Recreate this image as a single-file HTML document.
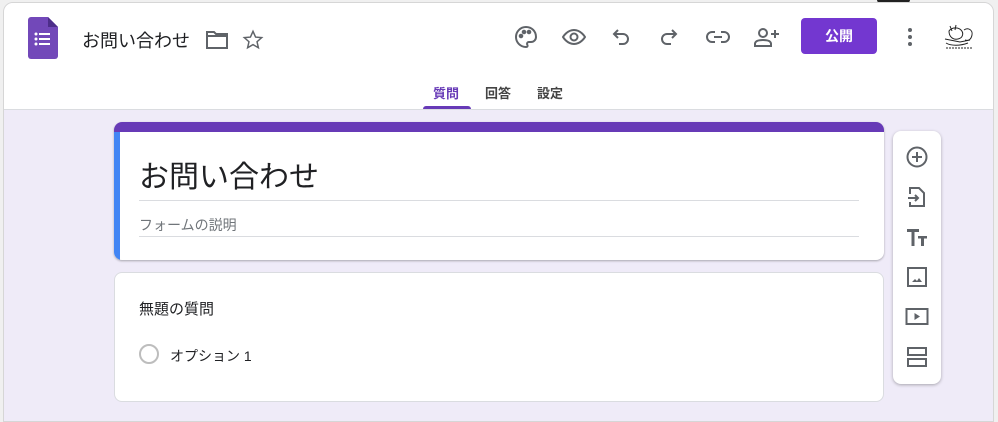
<!DOCTYPE html>
<html><head><meta charset="utf-8"><style>
*{box-sizing:border-box;margin:0;padding:0}
body{width:998px;height:416px;background:#f0f0f0;font-family:"Liberation Sans","Noto Sans CJK JP",sans-serif;position:relative;overflow:hidden}
.win{position:absolute;left:3px;top:2px;width:991px;height:420px;background:#efebf8;border:1px solid #d6d6d6;border-radius:10px 10px 0 0;overflow:hidden}
.hdr{position:absolute;left:0;top:0;width:100%;height:107px;background:#fff;border-bottom:1px solid #dadce0}
.ab{position:absolute}
svg.i{position:absolute;fill:none;stroke:#5f6368;stroke-width:2}
.card{position:absolute;background:#fff;border:1px solid #dadce0;border-radius:8px}
</style></head><body>
<div style="position:absolute;left:877px;top:0;width:33px;height:3px;background:#222;border-radius:0 0 3px 3px"></div>
<div class="win">
<div class="hdr">
 <svg class="ab" style="left:24px;top:14px" width="30" height="42" viewBox="0 0 30 42"><path d="M3 0h17l10 10v29a3 3 0 0 1-3 3H3a3 3 0 0 1-3-3V3a3 3 0 0 1 3-3z" fill="#7248b9"/><path d="M20 0l10 10H20z" fill="#4d2e8a"/><g fill="#fff"><circle cx="8" cy="17" r="1.5"/><circle cx="8" cy="22" r="1.5"/><circle cx="8" cy="27" r="1.5"/><rect x="11" y="16" width="11" height="2"/><rect x="11" y="21" width="11" height="2"/><rect x="11" y="26" width="11" height="2"/></g></svg>
 <div class="ab" style="left:78px;top:24px;font-size:18px;color:#202124">お問い合わせ</div>
 <svg class="i" style="left:202px;top:28px" width="22" height="18" viewBox="0 0 22 18"><path d="M1 1h7l2 2h11v14H1z"/><path d="M1 5h20"/></svg>
 <svg class="i" style="left:238px;top:26px;stroke-width:1.6" width="22" height="22" viewBox="0 0 24 24"><path d="M12 2.5l2.8 6.3 6.7.6-5.1 4.5 1.5 6.6L12 17l-5.9 3.5 1.5-6.6-5.1-4.5 6.7-.6z"/></svg>
 <svg class="i" style="left:510px;top:22px" width="24" height="24" viewBox="0 0 24 24"><path d="M12 2a10 10 0 0 0 0 20c1.5 0 2-1 1.3-2.2-.7-1.2 0-2.8 1.6-2.8H17a5 5 0 0 0 5-5C22 6 17.5 2 12 2z"/><circle cx="7" cy="11" r="1.3" fill="#5f6368"/><circle cx="10" cy="7" r="1.3" fill="#5f6368"/><circle cx="15" cy="7" r="1.3" fill="#5f6368"/></svg>
 <svg class="i" style="left:558px;top:22px" width="24" height="24" viewBox="0 0 24 24"><path d="M1 12s4-7 11-7 11 7 11 7-4 7-11 7S1 12 1 12z"/><circle cx="12" cy="12" r="3.5"/></svg>
 <svg class="i" style="left:606px;top:22px" width="24" height="24" viewBox="0 0 24 24"><path d="M8 5L4 9l4 4"/><path d="M4 9h9a5 5 0 0 1 0 10H9"/></svg>
 <svg class="i" style="left:652px;top:22px" width="24" height="24" viewBox="0 0 24 24"><path d="M16 5l4 4-4 4"/><path d="M20 9h-9a5 5 0 0 0 0 10h4"/></svg>
 <svg class="i" style="left:702px;top:22px" width="26" height="24" viewBox="0 0 26 24"><path d="M9 7H6a5 5 0 0 0 0 10h3M15 7h3a5 5 0 0 1 0 10h-3M8 12h8"/></svg>
 <svg class="i" style="left:750px;top:22px" width="26" height="24" viewBox="0 0 26 24"><circle cx="9" cy="8" r="4"/><path d="M1 21v-2c0-3 4-4 8-4s8 1 8 4v2z"/><path d="M21 5v8M17 9h8"/></svg>
 <div class="ab" style="left:797px;top:15px;width:76px;height:36px;background:#7337d0;border-radius:4px;color:#fff;font-size:14px;font-weight:bold;text-align:center;line-height:36px">公開</div>
 <svg class="ab" style="left:900px;top:22px" width="12" height="24"><g fill="#5f6368"><circle cx="6" cy="5" r="2"/><circle cx="6" cy="12" r="2"/><circle cx="6" cy="19" r="2"/></g></svg>
 <svg class="ab" style="left:938px;top:19px" width="34" height="30" viewBox="0 0 34 30" fill="none" stroke="#222" stroke-width="1"><path d="M8 4l2 5M14 3l-1 5M7 9c0 6 4 9 9 8s6-6 3-9-9-3-12 1z"/><path d="M22 8c4-3 9 0 8 5s-4 6-7 5M3 17l15 3 10-2M4 21c5 3 14 3 22 0"/><path d="M4 26h26" stroke-dasharray="2 1"/></svg>
 <div class="ab" style="left:429px;top:80px;font-size:13px;font-weight:bold;color:#673ab7">質問</div>
 <div class="ab" style="left:481px;top:80px;font-size:13px;font-weight:bold;color:#444">回答</div>
 <div class="ab" style="left:533px;top:80px;font-size:13px;font-weight:bold;color:#444">設定</div>
 <div class="ab" style="left:419px;top:103px;width:48px;height:3px;background:#673ab7;border-radius:3px 3px 0 0"></div>
</div>
<div class="card" style="left:110px;top:119px;width:770px;height:138px;border:none;border-radius:8px;overflow:hidden;box-shadow:0 1px 2px rgba(0,0,0,.3)">
 <div class="ab" style="left:0;top:0;width:100%;height:10px;background:#673ab7"></div>
 <div class="ab" style="left:0;top:10px;width:6px;height:128px;background:#4285f4"></div>
 <div class="ab" style="left:25px;top:30px;font-size:30px;color:#202124">お問い合わせ</div>
 <div class="ab" style="left:25px;top:78px;width:720px;height:1px;background:#dadce0"></div>
 <div class="ab" style="left:25px;top:93px;font-size:14px;color:#70757a">フォームの説明</div>
 <div class="ab" style="left:25px;top:114px;width:720px;height:1px;background:#dadce0"></div>
</div>
<div class="card" style="left:110px;top:269px;width:770px;height:130px">
 <div class="ab" style="left:24px;top:25px;font-size:15px;color:#202124">無題の質問</div>
 <div class="ab" style="left:24px;top:71px;width:20px;height:20px;border:2px solid #bdbdbd;border-radius:50%"></div>
 <div class="ab" style="left:55px;top:73px;font-size:14px;color:#202124">オプション 1</div>
</div>
<div class="card" style="left:889px;top:128px;width:48px;height:253px;border:none;box-shadow:0 1px 3px rgba(0,0,0,.3)">
 <svg class="i" style="left:12px;top:14px" width="24" height="24" viewBox="0 0 24 24"><circle cx="12" cy="12" r="9.5"/><path d="M12 7v10M7 12h10"/></svg>
 <svg class="i" style="left:12px;top:54px" width="24" height="24" viewBox="0 0 24 24"><path d="M5 9V3h9l5 5v13H5v-4"/><path d="M3 13h10M10 10l3 3-3 3"/></svg>
 <svg class="ab" style="left:12px;top:94px" width="24" height="24" viewBox="0 0 24 24" fill="#5f6368"><path d="M2 4h12v3H9.5v14h-3V7H2z"/><path d="M13 11h9v2.5h-3V21h-3v-7.5h-3z"/></svg>
 <svg class="i" style="left:12px;top:134px" width="24" height="24" viewBox="0 0 24 24"><rect x="3" y="3" width="18" height="18"/><path d="M7 17l3-3 2 2 2-3 3 4z" fill="#5f6368" stroke="none"/></svg>
 <svg class="i" style="left:12px;top:174px" width="24" height="24" viewBox="0 0 24 24"><rect x="1.5" y="4" width="21" height="15"/><path d="M9.5 8v7l5.5-3.5z" fill="#5f6368" stroke="none"/></svg>
 <svg class="i" style="left:12px;top:214px" width="24" height="24" viewBox="0 0 24 24"><rect x="3" y="3" width="18" height="7"/><rect x="3" y="14" width="18" height="7"/></svg>
</div>
</div>
</body></html>
